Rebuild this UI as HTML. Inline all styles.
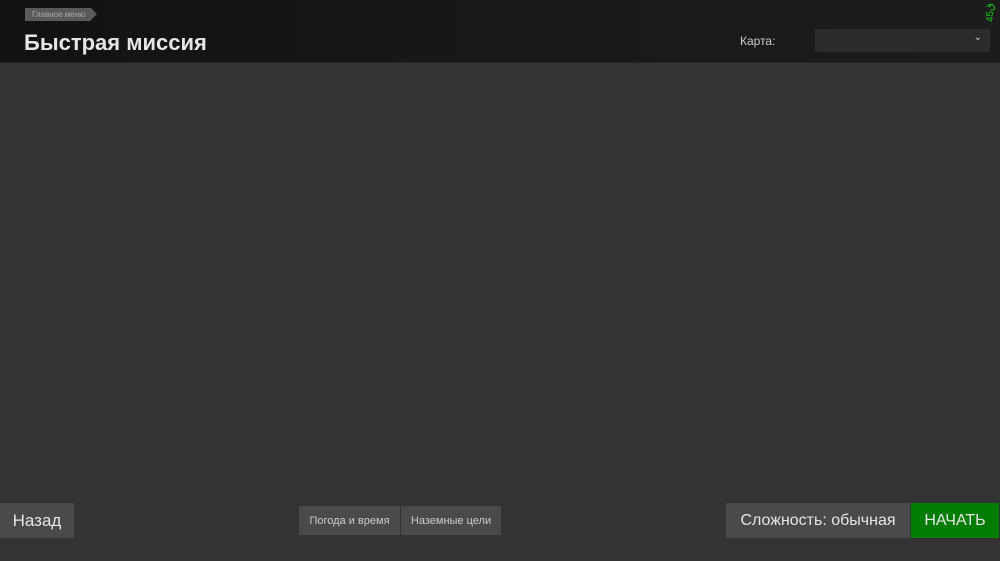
<!DOCTYPE html>
<html><head><meta charset="utf-8"><style>
*{margin:0;padding:0;box-sizing:border-box}
body{width:1000px;height:561px;background:#333;font-family:"Liberation Sans","DejaVu Sans",sans-serif;position:relative;overflow:hidden}
.hdr{position:absolute;left:0;top:0;width:1000px;height:63px;background:linear-gradient(90deg,#121212,#191919 60%,#1c1c1c);border-bottom:1px solid #262626}
.bc{position:absolute;left:25px;top:8px;height:13px;width:66px;background:#5a5a5a;color:#aaa;font-size:8px;line-height:13px;padding-left:7px}
.bc:after{content:"";position:absolute;right:-6px;top:0;border-left:6px solid #5a5a5a;border-top:6.5px solid transparent;border-bottom:6.5px solid transparent}
.t{position:absolute;left:24px;top:30px;font-size:22px;font-weight:bold;color:#e6e6e6}
.lbl{position:absolute;left:740px;top:34px;font-size:12px;color:#ccc}
.dd{position:absolute;left:815px;top:29px;width:175px;height:23px;background:#2b2b2b}
.dd span{position:absolute;right:8px;top:3px;color:#ccc;font-size:10px}
.b{position:absolute;background:#4a4a4a;color:#e6e6e6;display:flex;align-items:center;justify-content:center}
.fps{position:absolute;left:985px;top:0;width:15px;height:22px;color:#1c1;font-size:10px;writing-mode:vertical-rl;transform:rotate(180deg)}
</style></head><body>
<div class="hdr"></div>
<div class="bc">Главное меню</div>
<div class="t">Быстрая миссия</div>
<div class="lbl">Карта:</div>
<div class="dd"><span>⌄</span></div>
<div class="fps">45ق</div>
<div class="b" style="left:0;top:503px;width:74px;height:35px;font-size:17px">Назад</div>
<div class="b" style="left:299px;top:506px;width:101px;height:29px;font-size:11px;color:#ccc">Погода и время</div>
<div class="b" style="left:401px;top:506px;width:100px;height:29px;font-size:11px;color:#ccc">Наземные цели</div>
<div class="b" style="left:726px;top:503px;width:184px;height:35px;font-size:16px">Сложность: обычная</div>
<div class="b" style="left:911px;top:503px;width:88px;height:35px;font-size:16px;background:#007d00">НАЧАТЬ</div>
</body></html>
